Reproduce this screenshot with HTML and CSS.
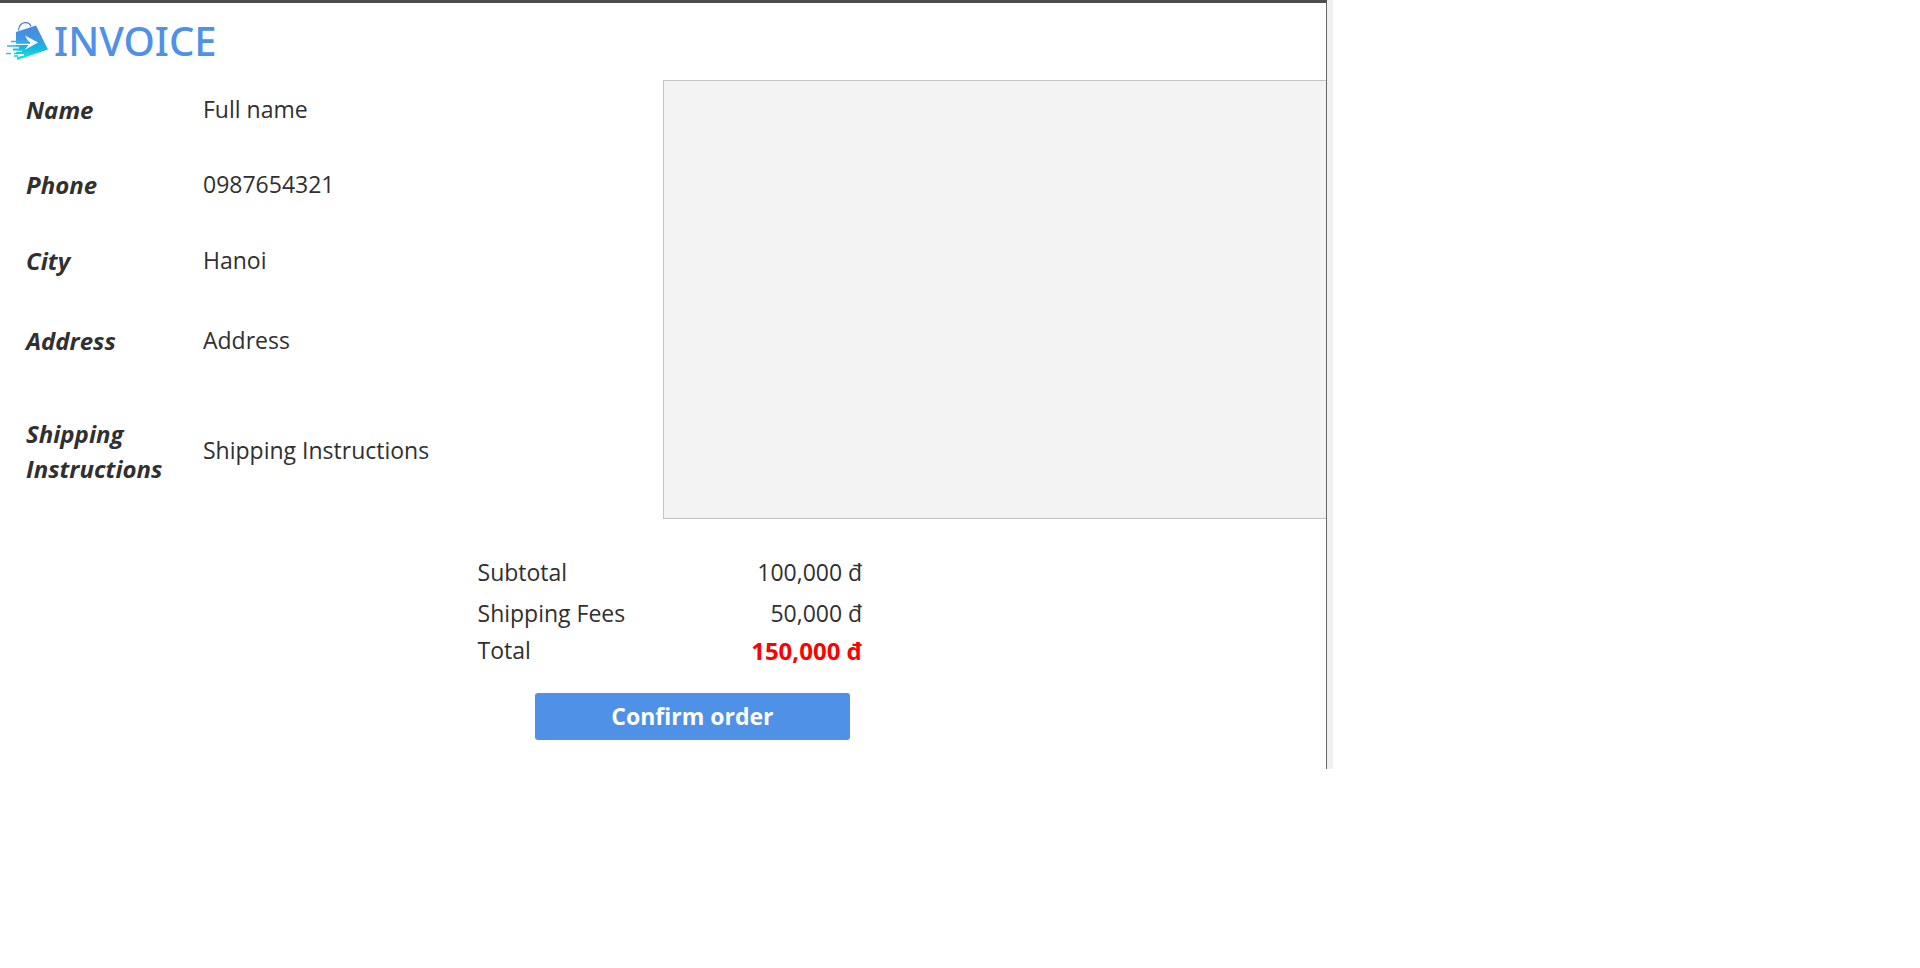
FILE: index.html
```html
<!DOCTYPE html>
<html lang="en">
<head>
<meta charset="utf-8">
<title>Invoice</title>
<link rel="stylesheet" href="styles.css">
</head>
<body>
<div class="window">
  <main class="invoice">
    <header class="header">
      <svg class="logo" viewBox="0 0 42 40" aria-hidden="true">
        <defs>
          <linearGradient id="bag" x1="0" y1="0" x2="0" y2="1">
            <stop offset="0" stop-color="#4a86e0"/>
            <stop offset=".4" stop-color="#3d98e6"/>
            <stop offset=".65" stop-color="#12b9e3"/>
            <stop offset="1" stop-color="#1ce6d6"/>
          </linearGradient>
        </defs>
        <path d="M12.500 9.500C13 5 15.500 2 19 1.700C22 1.400 24 3 25 5.500" fill="none" stroke="#3f7ddd" stroke-width="1.200"/>
        <path d="M10 11L30 4.500L42 28.500L11 39L11 36L18 34.500V33H10V31H16V29.500H7V27.500H13V25.500H10Z" fill="url(#bag)"/>
        <path d="M19 14.500L32 21.500L18.500 29L22.500 24H8V22.800H24V21H8V20H22Z" fill="#fff"/>
        <path d="M5 20.500H23M1 25H15" stroke="#35b3e6" stroke-width="1.300"/>
        <path d="M11 29H17M0 32.500H5M8 32.500H13M8 35H12" stroke="#20cbe0" stroke-width="1.400"/>
      </svg>
      <h1 class="title">INVOICE</h1>
    </header>
    <section class="details">
      <dl class="fields">
        <dt>Name</dt><dd>Full name</dd>
        <dt>Phone</dt><dd>0987654321</dd>
        <dt>City</dt><dd>Hanoi</dd>
        <dt>Address</dt><dd>Address</dd>
        <dt>Shipping Instructions</dt><dd>Shipping Instructions</dd>
      </dl>
      <div class="items"></div>
    </section>
    <dl class="totals">
      <dt>Subtotal</dt><dd>100,000 đ</dd>
      <dt>Shipping Fees</dt><dd>50,000 đ</dd>
      <dt>Total</dt><dd class="grand">150,000 đ</dd>
    </dl>
    <button class="confirm" type="button">Confirm order</button>
  </main>
</div>
</body>
</html>
```
FILE: styles.css
```css
* { box-sizing: border-box; }
body {
  margin: 0;
  background: #fff;
  color: #303030;
  font: 23px/35px "Open Sans", "Noto Sans", sans-serif;
}
.window {
  width: 69.45%;
  border-right: 6px solid #f0f0f0;
}
.invoice {
  border-top: 3px solid #4c4c4c;
  border-right: 1px solid #696969;
  padding-bottom: 29px;
}
.header {
  display: flex;
  align-items: center;
  gap: 6px;
  height: 69px;
  padding: 7px 0 0 6px;
}
.logo {
  width: 42px;
  height: 40px;
}
.title {
  margin: 0;
  color: #4f91e6;
  font-family: "Noto Sans", "Open Sans", sans-serif;
  font-size: 40px;
  font-weight: 500;
  line-height: 48px;
}
.details {
  display: grid;
  grid-template-columns: 1fr 1fr;
}
.fields {
  display: grid;
  grid-template-columns: 177px 1fr;
  grid-template-rows: 75px 75px 76px 84px 137px;
  align-items: center;
  margin: 0;
  padding-left: 26px;
}
.fields dt {
  padding-right: 32px;
  font-size: 24px;
  font-weight: 700;
  font-style: italic;
}
.fields dd, .totals dd { margin: 0; }
.items {
  margin-top: 8px;
  border: 1px solid #c4c4c4;
  border-right: 0;
  background: #f3f3f3;
}
.totals {
  display: grid;
  grid-template-columns: 1fr 1fr;
  grid-template-rows: 41px 37px 35px;
  width: 29%;
  margin: 36px 0 25px 36%;
}
.totals dd { text-align: right; }
.totals .grand {
  color: #f00;
  font-size: 24px;
  font-weight: 700;
}
.confirm {
  display: block;
  width: 23.8%;
  height: 47px;
  margin-left: 40.3%;
  padding: 0;
  border: 0;
  border-radius: 3px;
  background: #4f91e6;
  color: #fff;
  font: inherit;
  font-weight: 700;
}
```
